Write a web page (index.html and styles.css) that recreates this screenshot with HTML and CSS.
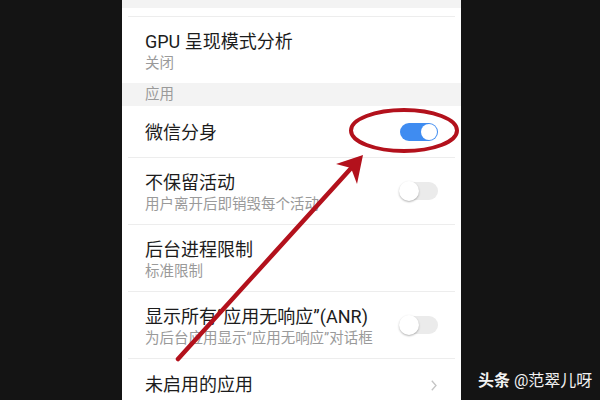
FILE: index.html
```html
<!DOCTYPE html>
<html lang="zh-CN">
<head>
  <meta charset="UTF-8">
  <title>开发者选项</title>
  <link rel="stylesheet" href="styles.css">
</head>
<body>
  <div class="page">
    <div class="screen">
      <div class="gap"></div>
      <div class="spacer"></div>

      <div class="row">
        <div class="texty">
          <p class="title">GPU 呈现模式分析</p>
          <p class="sub">关闭</p>
        </div>
      </div>

      <div class="section">应用</div>

      <div class="row single noline">
        <div class="texty">
          <p class="title">微信分身</p>
        </div>
        <span class="toggle on"></span>
      </div>

      <div class="row">
        <div class="texty">
          <p class="title">不保留活动</p>
          <p class="sub">用户离开后即销毁每个活动</p>
        </div>
        <span class="toggle"></span>
      </div>

      <div class="row">
        <div class="texty">
          <p class="title">后台进程限制</p>
          <p class="sub">标准限制</p>
        </div>
      </div>

      <div class="row">
        <div class="texty">
          <p class="title">显示所有“应用无响应”(ANR)</p>
          <p class="sub">为后台应用显示“应用无响应”对话框</p>
        </div>
        <span class="toggle"></span>
      </div>

      <div class="row last">
        <div class="texty">
          <p class="title">未启用的应用</p>
        </div>
        <svg class="chev" width="6" height="11" viewBox="0 0 6 11">
          <polyline points="0.8,0.8 5,5.5 0.8,10.2" fill="none" stroke="#c4c4c4" stroke-width="1.3"/>
        </svg>
      </div>
    </div>

    <div class="mark"><b>头条</b> @范翠儿呀</div>

    <!-- red marks drawn over the screenshot -->
    <svg class="annot" width="600" height="400" viewBox="0 0 600 400">
      <ellipse cx="404" cy="130.5" rx="53" ry="20.5" fill="none" stroke="#b3111c" stroke-width="4"/>
      <line x1="178" y1="359" x2="354" y2="165" stroke="#b3111c" stroke-width="4.5" stroke-linecap="round"/>
      <polygon points="363,155 336,164 351,168 357,184" fill="#b3111c"/>
    </svg>
  </div>
</body>
</html>
```

FILE: styles.css
```css
html, body {
  margin: 0;
  padding: 0;
  height: 100%;
}
body {
  background-color: #141414;
  font-family: Roboto, "Noto Sans CJK SC", sans-serif;
  overflow: hidden;
}
.page {
  position: relative;
  width: 600px;
  height: 400px;
  display: flex;
}
.screen {
  width: 339px;
  margin-left: 122px;
  height: 400px;
  background-color: #fff;
  overflow: hidden;
}
.gap {
  height: 8px;
  background-color: #f3f3f3;
}
.spacer {
  height: 8px;
}
.row {
  display: flex;
  align-items: center;
  height: 67px;
  box-sizing: border-box;
  margin: 0 6px;
  padding: 0 17px;
  border-top: 1px solid #ededed;
}
.row.noline {
  border-top: none;
}
.row.single {
  height: 51px;
}
.row.single .texty {
  align-self: center;
  padding-top: 2px;
}
.row.last {
  height: 42px;
}
.row.last .texty {
  padding-top: 15px;
}
.texty {
  flex: 1;
  align-self: flex-start;
  padding-top: 14px;
}
.title {
  margin: 0;
  font-size: 18px;
  line-height: 22px;
  height: 22px;
  color: #1c1c1c;
  white-space: nowrap;
}
.sub {
  margin: 1px 0 0;
  font-size: 14.5px;
  line-height: 20px;
  height: 20px;
  color: #9a9a9a;
  white-space: nowrap;
}
.section {
  height: 23px;
  line-height: 23px;
  background-color: #f3f3f3;
  padding-left: 23px;
  font-size: 14.5px;
  color: #9a9a9a;
}
.toggle {
  position: relative;
  width: 38px;
  height: 18px;
  border-radius: 9px;
  background-color: #ebebeb;
  flex-shrink: 0;
}
.toggle::after {
  content: "";
  position: absolute;
  left: -1px;
  top: -1px;
  width: 20px;
  height: 20px;
  border-radius: 50%;
  background-color: #fff;
  box-shadow: 0 1px 2px rgba(0, 0, 0, 0.3);
}
.toggle.on {
  background-color: #3f8cf1;
}
.toggle.on::after {
  left: auto;
  right: 1px;
  top: 1px;
  width: 16px;
  height: 16px;
  box-shadow: none;
}
.chev {
  margin-right: 1px;
  align-self: flex-start;
  margin-top: 21px;
}
.mark {
  position: absolute;
  left: 478px;
  top: 370px;
  font-size: 16px;
  line-height: 22px;
  color: #f2f2f2;
  white-space: nowrap;
}
.annot {
  position: absolute;
  left: 0;
  top: 0;
  pointer-events: none;
}
```
